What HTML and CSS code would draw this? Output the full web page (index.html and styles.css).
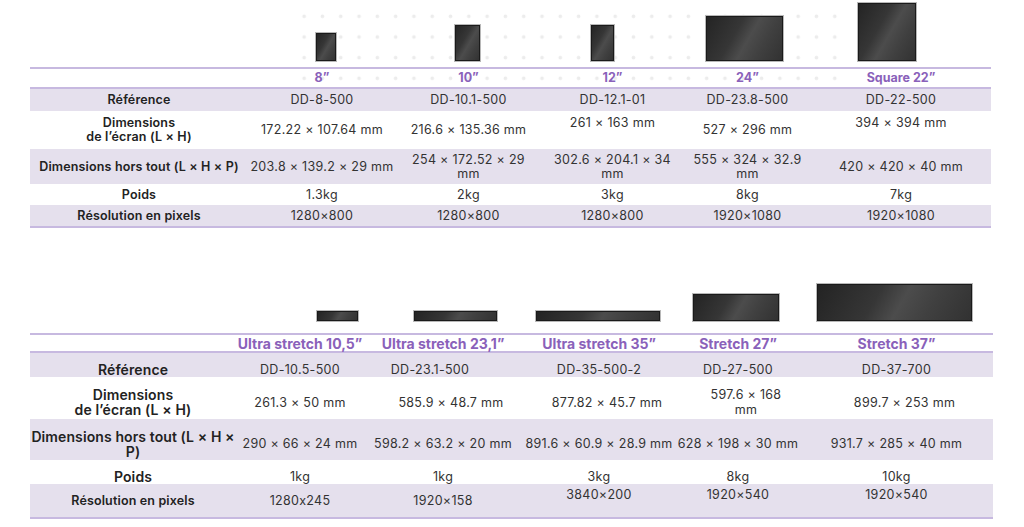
FILE: index.html
```html
<!DOCTYPE html>
<html lang="fr">
<head>
<meta charset="utf-8">
<title>Caractéristiques des écrans</title>
<link rel="stylesheet" href="styles.css">
</head>
<body>
<div class="page">
  <section class="block block-top">
    <div class="screens screens-top">
      <div class="scr t8"></div>
      <div class="scr t10"></div>
      <div class="scr t12"></div>
      <div class="scr t24"></div>
      <div class="scr tsq"></div>
    </div>
    <div class="spec spec-top">
      <div class="c head"></div>
      <div class="c head">8”</div>
      <div class="c head">10”</div>
      <div class="c head">12”</div>
      <div class="c head">24”</div>
      <div class="c head">Square 22”</div>

      <div class="c lbl sh">Référence</div>
      <div class="c sh">DD-8-500</div>
      <div class="c sh">DD-10.1-500</div>
      <div class="c sh">DD-12.1-01</div>
      <div class="c sh">DD-23.8-500</div>
      <div class="c sh">DD-22-500</div>

      <div class="c lbl">Dimensions<br>de l’écran (L × H)</div>
      <div class="c">172.22 × 107.64 mm</div>
      <div class="c">216.6 × 135.36 mm</div>
      <div class="c up">261 × 163 mm</div>
      <div class="c">527 × 296 mm</div>
      <div class="c up">394 × 394 mm</div>

      <div class="c lbl sh">Dimensions hors tout (L × H × P)</div>
      <div class="c sh">203.8 × 139.2 × 29 mm</div>
      <div class="c sh">254 × 172.52 × 29<br>mm</div>
      <div class="c sh">302.6 × 204.1 × 34<br>mm</div>
      <div class="c sh">555 × 324 × 32.9<br>mm</div>
      <div class="c sh">420 × 420 × 40 mm</div>

      <div class="c lbl">Poids</div>
      <div class="c">1.3kg</div>
      <div class="c">2kg</div>
      <div class="c">3kg</div>
      <div class="c">8kg</div>
      <div class="c">7kg</div>

      <div class="c lbl sh last">Résolution en pixels</div>
      <div class="c sh last">1280×800</div>
      <div class="c sh last">1280×800</div>
      <div class="c sh last">1280×800</div>
      <div class="c sh last">1920×1080</div>
      <div class="c sh last">1920×1080</div>
    </div>
  </section>

  <section class="block block-bottom">
    <div class="screens screens-bottom">
      <div class="scr b10"></div>
      <div class="scr b23"></div>
      <div class="scr b35"></div>
      <div class="scr b27"></div>
      <div class="scr b37"></div>
    </div>
    <div class="spec spec-bottom">
      <div class="c head"></div>
      <div class="c head">Ultra stretch 10,5”</div>
      <div class="c head">Ultra stretch 23,1”</div>
      <div class="c head">Ultra stretch 35”</div>
      <div class="c head">Stretch 27”</div>
      <div class="c head">Stretch 37”</div>

      <div class="c lbl big sh">Référence</div>
      <div class="c sh">DD-10.5-500</div>
      <div class="c sh nudge-l">DD-23.1-500</div>
      <div class="c sh">DD-35-500-2</div>
      <div class="c sh">DD-27-500</div>
      <div class="c sh">DD-37-700</div>

      <div class="c lbl big">Dimensions<br>de l’écran (L × H)</div>
      <div class="c">261.3 × 50 mm</div>
      <div class="c nudge-r">585.9 × 48.7 mm</div>
      <div class="c nudge-r">877.82 × 45.7 mm</div>
      <div class="c nudge-r">597.6 × 168<br>mm</div>
      <div class="c nudge-r">899.7 × 253 mm</div>

      <div class="c lbl big sh">Dimensions hors tout (L × H ×<br>P)</div>
      <div class="c sh">290 × 66 × 24 mm</div>
      <div class="c sh">598.2 × 63.2 × 20 mm</div>
      <div class="c sh">891.6 × 60.9 × 28.9 mm</div>
      <div class="c sh">628 × 198 × 30 mm</div>
      <div class="c sh">931.7 × 285 × 40 mm</div>

      <div class="c lbl big">Poids</div>
      <div class="c">1kg</div>
      <div class="c">1kg</div>
      <div class="c">3kg</div>
      <div class="c">8kg</div>
      <div class="c">10kg</div>

      <div class="c lbl sh last">Résolution en pixels</div>
      <div class="c sh last">1280x245</div>
      <div class="c sh last">1920×158</div>
      <div class="c sh last hi">3840×200</div>
      <div class="c sh last hi">1920×540</div>
      <div class="c sh last hi">1920×540</div>
    </div>
  </section>
</div>
</body>
</html>
```

FILE: styles.css
```css
html, body {
  margin: 0;
  padding: 0;
  background: #ffffff;
}

body {
  font-family: "Inter", "Liberation Sans", sans-serif;
  color: #333333;
}

.page {
  width: 1024px;
}

.block {
  position: relative;
  isolation: isolate;
}

.block-top {
  padding-top: 2px;
}

.block-top::before {
  content: "";
  position: absolute;
  left: 295px;
  top: 6px;
  width: 552px;
  height: 82px;
  z-index: -1;
  background-image: radial-gradient(circle, #ececec 0, #ececec 1.5px, rgba(255,255,255,0) 2.2px);
  background-size: 18.3px 20.67px;
}

.block-bottom {
  margin-top: 55px;
}

/* screens */
.screens {
  display: flex;
  align-items: flex-end;
}

.screens-top {
  height: 60px;
  margin-bottom: 5px;
}

.screens-bottom {
  height: 39px;
  margin-bottom: 11px;
}

.scr {
  box-sizing: border-box;
  flex: none;
  border: 1px solid #b8b8b8;
  box-shadow: inset 0 0 0 1px #1a1a1a;
  background: linear-gradient(120deg, #232323 0%, #363636 38%, #4c4c4c 54%, #404040 72%, #313131 100%);
}

.t8  { margin-left: 315px; width: 22px; height: 30px; }
.t10 { margin-left: 117px; width: 27px; height: 38px; }
.t12 { margin-left: 109px; width: 25px; height: 38px; }
.t24 { margin-left: 90px;  width: 79px; height: 47px; }
.tsq { margin-left: 73px;  width: 60px; height: 60px; }

.b10 { margin-left: 316px; width: 43px;  height: 12px; }
.b23 { margin-left: 54px;  width: 85px;  height: 12px; }
.b35 { margin-left: 37px;  width: 126px; height: 12px; }
.b27 { margin-left: 31px;  width: 88px;  height: 29px; }
.b37 { margin-left: 36px;  width: 157px; height: 39px; }

/* spec grids */
.spec {
  display: grid;
  margin-left: 30px;
  font-size: 12.5px;
  letter-spacing: 0.3px;
}

.spec-top {
  width: 961px;
  grid-template-columns: 218px 148px 145px 143px 127px 180px;
  grid-template-rows: 22px 22px 38px 35px 21px 23px;
  line-height: 14px;
}

.spec-bottom {
  width: 963px;
  grid-template-columns: 206px 128px 158px 154px 124px 193px;
  grid-template-rows: 20px 24px 42px 41px 24px 35px;
  line-height: 15px;
}

.c {
  box-sizing: border-box;
  display: flex;
  align-items: center;
  justify-content: center;
  text-align: center;
  white-space: nowrap;
}

.sh {
  background: #e5e0ed;
}

.head {
  border-top: 2px solid #c7b9e0;
  border-bottom: 2px solid #c7b9e0;
  color: #8a61ba;
  font-weight: 700;
  letter-spacing: 0;
}

.spec-top .head {
  font-size: 12.5px;
}

.spec-bottom .head {
  font-size: 14px;
}

.last {
  border-bottom: 2px solid #c7b9e0;
}

.lbl {
  font-weight: 600;
  color: #222222;
  letter-spacing: 0.15px;
}

.lbl.big {
  font-size: 14px;
  letter-spacing: 0.1px;
}

.spec-top .up {
  align-items: flex-start;
  padding-top: 5px;
}

/* bottom table: text sits low in its row */
.spec-bottom .c:not(.head):not(.last) {
  padding-top: 8px;
}

.spec-bottom .hi {
  padding-bottom: 12px;
}

.nudge-l {
  padding-right: 26px;
}

.nudge-r {
  padding-left: 16px;
}
```
